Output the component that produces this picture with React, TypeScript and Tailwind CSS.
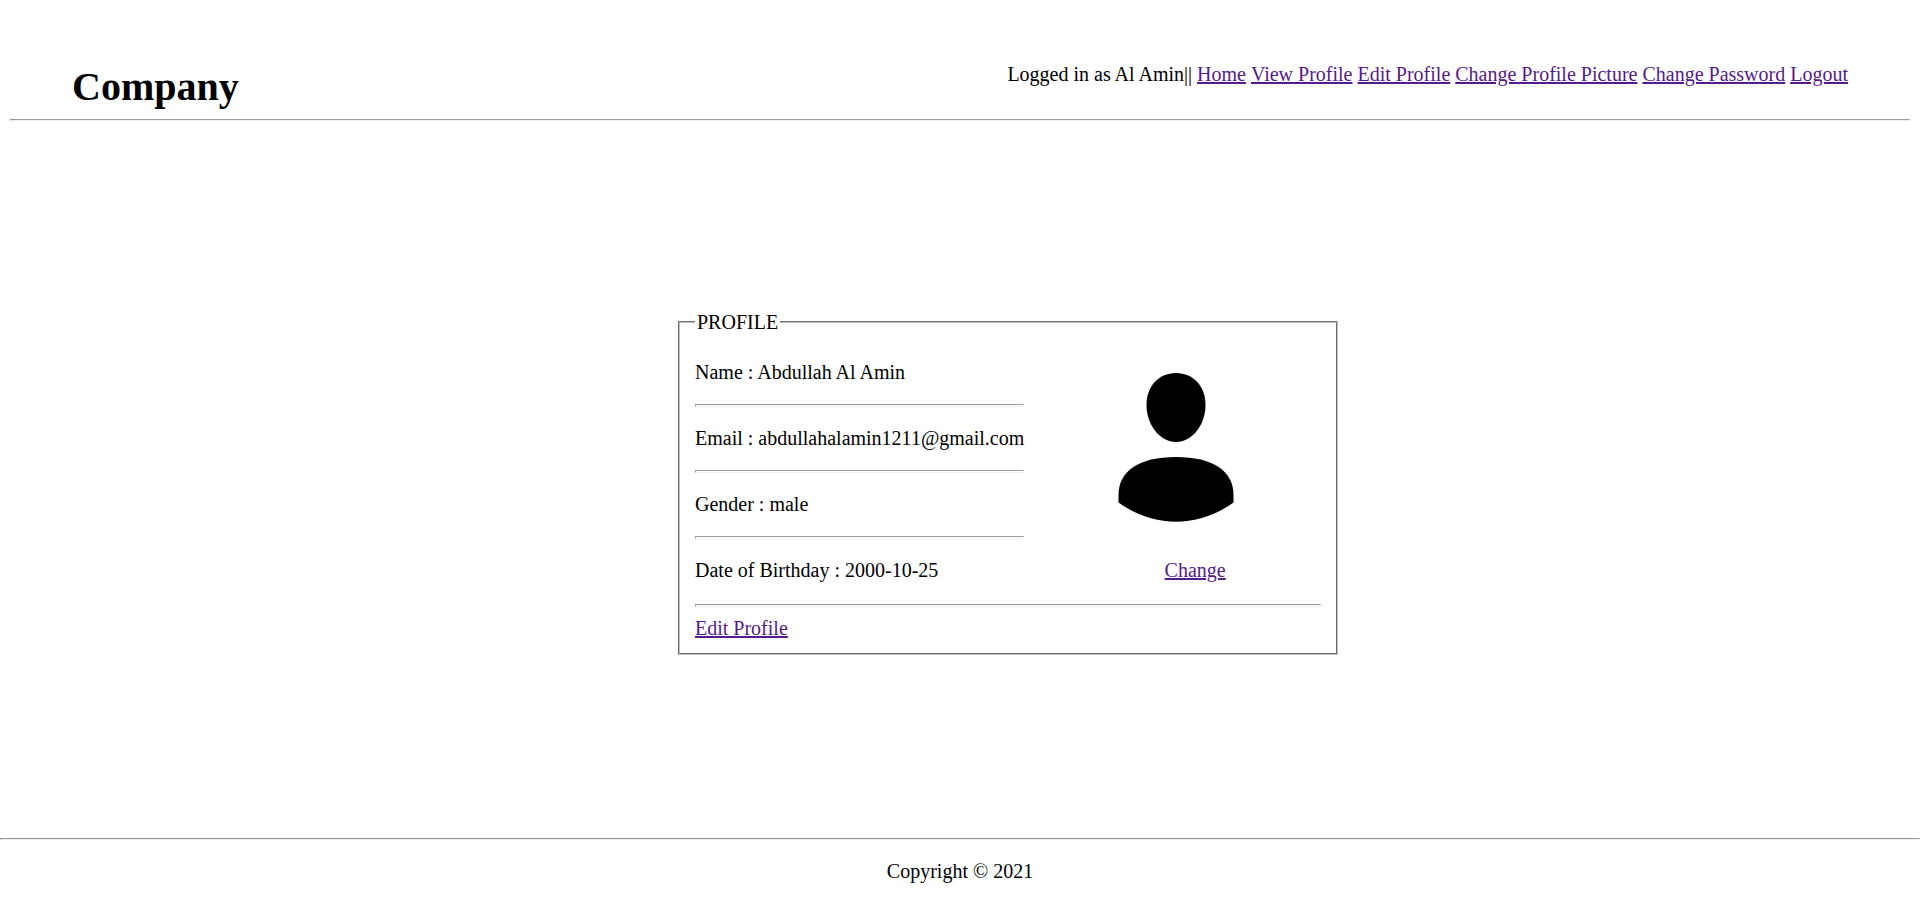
import type { ReactNode } from "react";

const navLinks = ["Home", "View Profile", "Edit Profile", "Change Profile Picture", "Change Password", "Logout"];

const details = [
  { label: "Name", value: "Abdullah Al Amin" },
  { label: "Email", value: "abdullahalamin1211@gmail.com" },
  { label: "Gender", value: "male" },
  { label: "Date of Birthday", value: "2000-10-25" },
];

function TextLink({ children }: { children: ReactNode }) {
  return (
    <a href="#" className="text-[#551a8b] underline decoration-2">
      {children}
    </a>
  );
}

function Rule({ tall = false }: { tall?: boolean }) {
  return (
    <hr
      className={
        (tall ? "h-[3px] " : "h-[2px] ") +
        "border border-t-[#9a9a9a] border-l-[#9a9a9a] border-r-[#eeeeee] border-b-[#eeeeee]"
      }
    />
  );
}

function Avatar() {
  return (
    <svg viewBox="0 0 116 149" className="h-[149px] w-[116px]" role="img" aria-label="Profile picture">
      <path d="M58 0C76 0 87.500 14 87.500 32C87.500 52 74 69 58 69C42 69 28.500 52 28.500 32C28.500 14 40 0 58 0Z" />
      <path d="M0.500 129.500V122C0.500 98 21 84 58 84C95 84 115.500 98 115.500 122V129.500C80 155 36 155 0.500 129.500Z" />
    </svg>
  );
}

export default function App() {
  return (
    <div className="flex min-h-screen flex-col bg-white font-['Liberation_Serif','Times_New_Roman',serif] text-[20px] leading-[23px] text-black">
      <header className="px-[10px] pt-[63px]">
        <div className="flex items-start justify-between px-[62px] pb-2">
          <h1 className="text-[40px] leading-[48px] font-bold">Company</h1>
          <nav className="flex gap-[5px]">
            <span>Logged in as Al Amin||</span>
            {navLinks.map((label) => (
              <TextLink key={label}>{label}</TextLink>
            ))}
          </nav>
        </div>
        <Rule />
      </header>

      <main className="flex flex-1 items-start justify-center pt-[190px] pl-24">
        <fieldset className="w-[660px] border-2 border-[#c0c0c0] [border-style:groove] px-[15px] pb-[13px]">
          <legend className="px-[2px] leading-[22px]">PROFILE</legend>
          <div className="flex pt-7 pb-[2px]">
            <div>
              {details.map(({ label, value }, i) => (
                <div key={label}>
                  {i > 0 && <Rule tall />}
                  <p className={i > 0 ? "py-5" : "pb-5"}>
                    {label} : {value}
                  </p>
                </div>
              ))}
            </div>
            <div className="flex flex-1 flex-col items-center pt-3 pl-[7px]">
              <Avatar />
              <p className="pt-[37px] pl-[38px]">
                <TextLink>Change</TextLink>
              </p>
            </div>
          </div>
          <Rule tall />
          <p className="pt-[10px]">
            <TextLink>Edit Profile</TextLink>
          </p>
        </fieldset>
      </main>

      <footer className="pb-[19px] text-center">
        <Rule />
        <p className="pt-5">Copyright © 2021</p>
      </footer>
    </div>
  );
}
